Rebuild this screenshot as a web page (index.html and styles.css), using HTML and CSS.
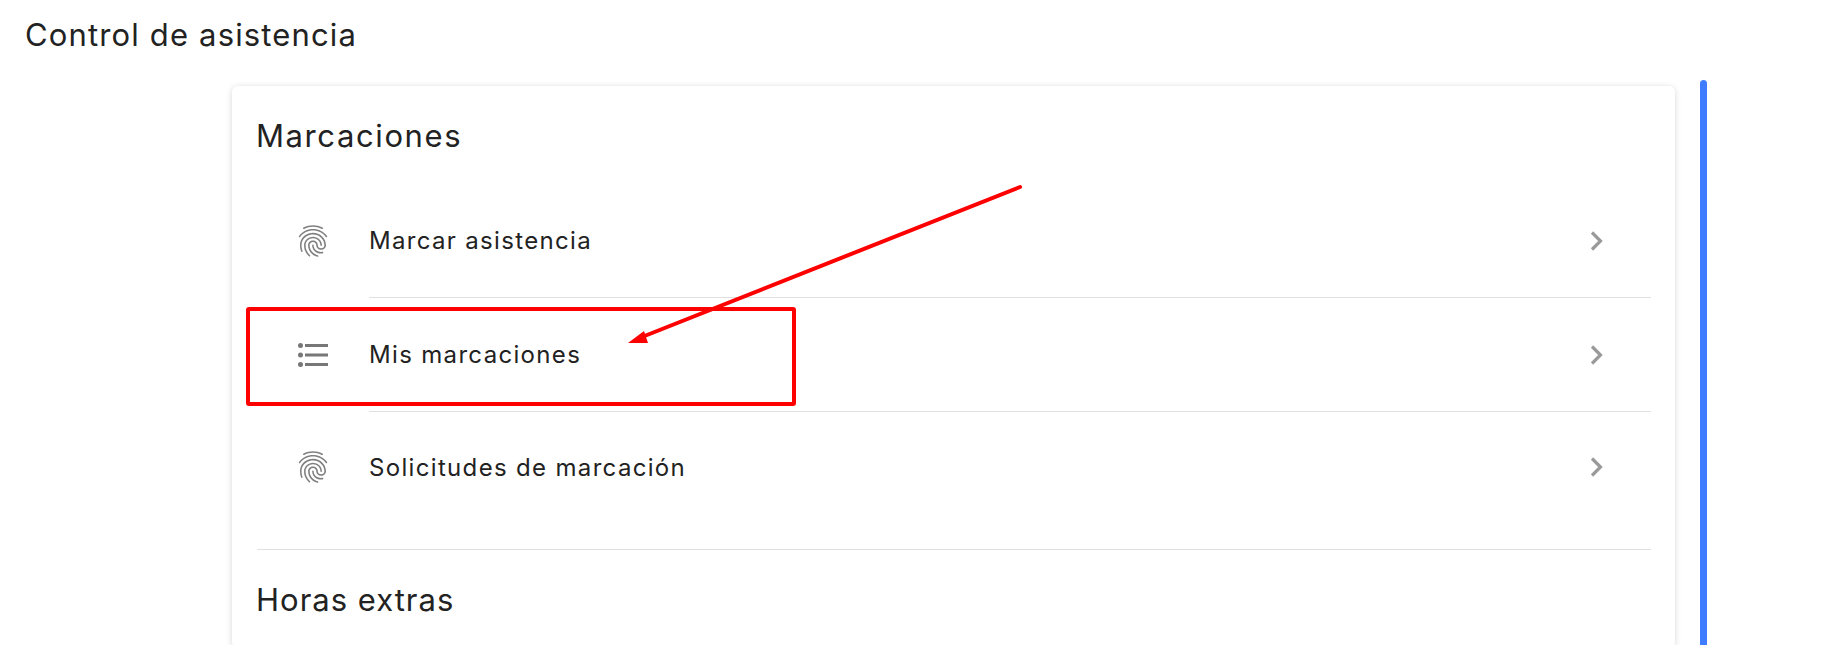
FILE: index.html
```html
<!DOCTYPE html>
<html lang="es">
  <head>
    <meta charset="UTF-8" />
    <meta name="viewport" content="width=device-width, initial-scale=1.0" />
    <title>Control de asistencia</title>
    <link rel="stylesheet" href="styles.css">
  </head>
  <body>
    <svg width="0" height="0" class="defs">
      <symbol id="fingerprint" viewBox="0 0 24 24">
        <path d="M17.81 4.47c-.08 0-.16-.02-.23-.06C15.66 3.42 14 3 12.01 3c-1.98 0-3.86.47-5.58 1.41-.24.13-.54.04-.68-.2-.13-.24-.04-.55.2-.68C7.82 2.52 9.86 2 12.01 2c2.13 0 3.99.47 6.03 1.52.25.13.34.43.21.67-.09.18-.26.28-.44.28zM3.5 9.72c-.1 0-.2-.03-.29-.09-.23-.16-.28-.47-.12-.7.99-1.4 2.25-2.5 3.75-3.27C9.98 4.04 14 4.03 17.15 5.65c1.5.77 2.76 1.86 3.75 3.25.16.22.11.54-.12.7-.23.16-.54.11-.7-.12-.9-1.26-2.04-2.25-3.39-2.94-2.87-1.47-6.54-1.47-9.4.01-1.36.7-2.5 1.7-3.4 2.96-.08.14-.23.21-.39.21zm6.25 12.07c-.13 0-.26-.05-.35-.15-.87-.87-1.34-1.43-2.01-2.64-.69-1.23-1.05-2.73-1.05-4.34 0-2.97 2.54-5.39 5.66-5.39s5.66 2.42 5.66 5.39c0 .28-.22.5-.5.5s-.5-.22-.5-.5c0-2.42-2.09-4.39-4.66-4.39s-4.66 1.97-4.66 4.39c0 1.44.32 2.77.93 3.85.64 1.15 1.08 1.64 1.85 2.42.19.2.19.51 0 .71-.11.1-.24.15-.37.15zm7.17-1.85c-1.19 0-2.24-.3-3.1-.89-1.49-1.01-2.38-2.65-2.38-4.39 0-.28.22-.5.5-.5s.5.22.5.5c0 1.41.72 2.74 1.94 3.56.71.48 1.54.71 2.54.71.24 0 .64-.03 1.04-.1.27-.05.53.13.58.41.05.27-.13.53-.41.58-.57.11-1.07.12-1.21.12zM14.91 22c-.04 0-.09-.01-.13-.02-1.59-.44-2.63-1.03-3.72-2.1-1.4-1.39-2.17-3.24-2.17-5.22 0-1.62 1.38-2.94 3.08-2.94s3.08 1.32 3.08 2.94c0 1.07.93 1.94 2.08 1.94s2.08-.87 2.08-1.94c0-3.77-3.25-6.83-7.25-6.83-2.84 0-5.44 1.58-6.61 4.03-.39.81-.59 1.76-.59 2.8 0 .78.07 2.01.67 3.61.1.26-.03.55-.29.64-.26.1-.55-.04-.64-.29-.49-1.31-.73-2.61-.73-3.96 0-1.2.23-2.29.68-3.24 1.33-2.79 4.28-4.6 7.51-4.6 4.55 0 8.25 3.51 8.25 7.83 0 1.62-1.38 2.94-3.08 2.94s-3.08-1.32-3.08-2.94c0-1.07-.93-1.94-2.08-1.94s-2.08.87-2.08 1.94c0 1.71.66 3.31 1.87 4.51.95.94 1.86 1.46 3.27 1.85.27.07.42.35.35.61-.05.23-.26.38-.47.38z"/>
      </symbol>
      <symbol id="chevron" viewBox="0 0 24 24">
        <path d="M7 3.5 L15.5 12 L7 20.5" fill="none" stroke="currentColor" stroke-width="3.2"/>
      </symbol>
    </svg>

    <h1 class="page-title">Control de asistencia</h1>

    <div class="content">
      <main class="card">
        <section class="group">
          <h2 class="group-title">Marcaciones</h2>
          <a class="row" href="#">
            <span class="row-icon"><svg class="icon icon-print"><use href="#fingerprint"/></svg></span>
            <span class="row-body">
              <span class="row-label">Marcar asistencia</span>
              <svg class="chevron"><use href="#chevron"/></svg>
            </span>
          </a>
          <a class="row" href="#">
            <span class="row-icon">
              <svg class="icon" viewBox="0 0 38 38">
                <circle cx="6.5" cy="9.5" r="2.5"/>
                <circle cx="6.5" cy="19" r="2.5"/>
                <circle cx="6.5" cy="28.5" r="2.5"/>
                <rect x="11" y="8" width="23" height="3"/>
                <rect x="11" y="17.5" width="23" height="3"/>
                <rect x="11" y="27" width="23" height="3"/>
              </svg>
            </span>
            <span class="row-body">
              <span class="row-label">Mis marcaciones</span>
              <svg class="chevron"><use href="#chevron"/></svg>
            </span>
          </a>
          <a class="row row-last" href="#">
            <span class="row-icon"><svg class="icon icon-print"><use href="#fingerprint"/></svg></span>
            <span class="row-body">
              <span class="row-label">Solicitudes de marcación</span>
              <svg class="chevron"><use href="#chevron"/></svg>
            </span>
          </a>
        </section>
        <section class="group group-next">
          <h2 class="group-title">Horas extras</h2>
        </section>
      </main>
      <div class="scrollbar"></div>
    </div>

    <!-- anotacion roja encima de la captura -->
    <svg class="annotation" viewBox="0 0 1828 645">
      <rect x="248" y="309" width="546" height="95" rx="1" fill="none" stroke="#ff0000" stroke-width="4"/>
      <path d="M1020 187 L642 337" fill="none" stroke="#ff0000" stroke-width="4" stroke-linecap="round"/>
      <path d="M628 343 L644 331 L648 343 Z" fill="#ff0000"/>
    </svg>
  </body>
</html>
```

FILE: styles.css
```css
/* Control de asistencia */
html, body {
    height: 100%;
}

body {
    margin: 0;
    overflow: hidden;
    position: relative;
    background: #ffffff;
    color: #222222;
    font-family: Inter, "Noto Sans", sans-serif;
}

a {
    color: inherit;
    text-decoration: none;
}

.defs {
    display: block;
    height: 0;
}

.page-title {
    margin: 0;
    padding: 16px 0 0 25px;
    height: 64px;
    box-sizing: border-box;
    font-size: 31px;
    line-height: 38px;
    font-weight: 400;
    letter-spacing: 1.15px;
}

.content {
    display: flex;
    align-items: flex-start;
    gap: 25px;
    padding-left: 232px;
    padding-top: 16px;
}

.card {
    width: 1443px;
    margin-top: 6px;
    padding: 0 24px 0 25px;
    box-sizing: border-box;
    background: #ffffff;
    border-radius: 6px;
    box-shadow: 0 1px 6px rgba(0, 0, 0, 0.16);
}

.group-title {
    margin: 0 0 0 -1px;
    padding-top: 31px;
    height: 98px;
    box-sizing: border-box;
    font-size: 31px;
    line-height: 38px;
    font-weight: 400;
    letter-spacing: 1.6px;
}

.row {
    display: flex;
    height: 114px;
}

.row-icon {
    flex: 0 0 112px;
    display: flex;
    align-items: center;
    justify-content: center;
}

.icon {
    width: 38px;
    height: 38px;
    fill: #777777;
}

.icon-print {
    fill: #808080;
}

.row-body {
    flex: 1;
    display: flex;
    align-items: center;
    justify-content: space-between;
    padding-right: 42px;
    border-bottom: 1px solid #e0e0e0;
}

.row-last {
    height: 110px;
}

.row-last .row-body {
    border-bottom: none;
}

.row-label {
    font-size: 24px;
    font-weight: 400;
    letter-spacing: 1.33px;
}

.chevron {
    width: 24px;
    height: 24px;
    color: #9a9a9a;
}

.group-next {
    margin-top: 27px;
    border-top: 1px solid #e0e0e0;
}

.group-next .group-title {
    letter-spacing: 1px;
}

.scrollbar {
    width: 7px;
    height: 700px;
    background: #3f7cff;
    border-radius: 4px;
}

.annotation {
    position: absolute;
    left: 0;
    top: 0;
    width: 1828px;
    height: 645px;
    pointer-events: none;
}
```
